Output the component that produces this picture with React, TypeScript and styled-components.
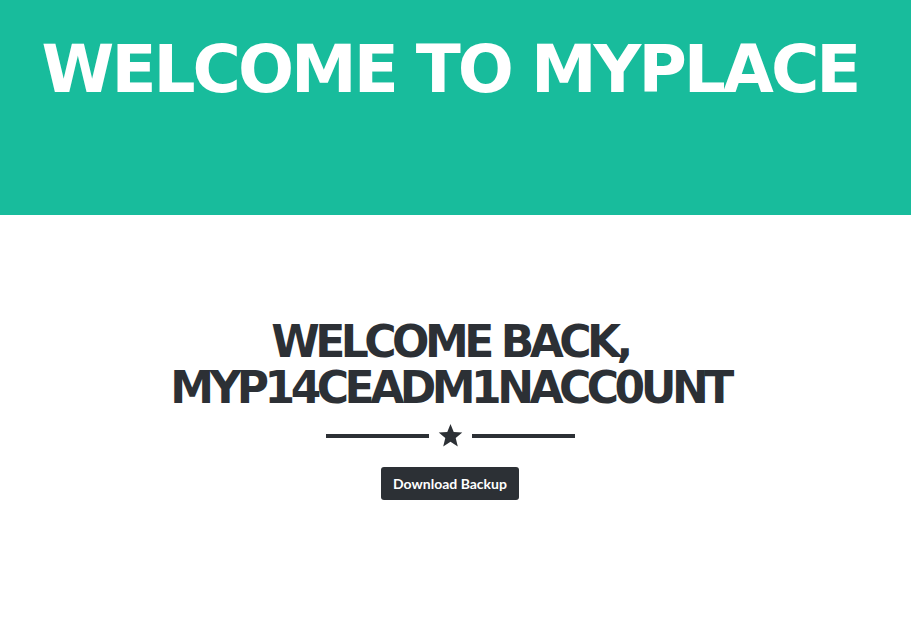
import React from 'react';
import styled, { createGlobalStyle } from 'styled-components';

const GlobalStyle = createGlobalStyle`
  html, body {
    margin: 0;
    padding: 0;
    background: #ffffff;
  }
  body {
    font-family: 'Lato', 'Liberation Sans', sans-serif;
  }
`;

const Page = styled.div`
  width: 100%;
  min-height: 100vh;
  display: flex;
  flex-direction: column;
`;

const Hero = styled.header`
  background-color: #18bc9c;
  height: 215px;
  box-sizing: border-box;
  padding: 34px 11px 0 0;
  display: flex;
  justify-content: center;
`;

const HeroTitle = styled.h1`
  margin: 0;
  color: #ffffff;
  font-family: 'DejaVu Sans', 'Liberation Sans', sans-serif;
  font-weight: 700;
  font-size: 66px;
  line-height: 1.1;
  letter-spacing: -3px;
  text-transform: uppercase;
  white-space: nowrap;
`;

const Content = styled.section`
  padding: 104px 11px 0 0;
  display: flex;
  flex-direction: column;
  align-items: center;
`;

const Greeting = styled.h2`
  margin: 0;
  color: #2c3035;
  font-family: 'DejaVu Sans', 'Liberation Sans', sans-serif;
  font-weight: 700;
  font-size: 44px;
  line-height: 46px;
  letter-spacing: -4.5px;
  text-align: center;
  text-transform: uppercase;
`;

const Divider = styled.div`
  margin-top: 12px;
  display: flex;
  align-items: center;
  gap: 9px;
  height: 25px;
`;

const Rule = styled.span`
  display: block;
  width: 103px;
  height: 4px;
  background: #2c3035;
`;

const StarIcon = styled.svg`
  width: 25px;
  height: 25px;
  display: block;
  fill: #2c3035;
`;

const Button = styled.button`
  margin-top: 19px;
  background: #2c3035;
  color: #ffffff;
  border: none;
  border-radius: 3px;
  padding: 0 12px;
  height: 33px;
  font-family: 'Lato', 'Liberation Sans', sans-serif;
  font-weight: 700;
  font-size: 14px;
  cursor: pointer;
`;

const App: React.FC = () => {
  return (
    <>
      <GlobalStyle />
      <Page>
        <Hero>
          <HeroTitle>Welcome to MyPlace</HeroTitle>
        </Hero>
        <Content>
          <Greeting>
            Welcome back,
            <br />
            MYP14CEADM1NACC0UNT
          </Greeting>
          <Divider>
            <Rule />
            <StarIcon viewBox="0 0 24 24">
              <polygon points="12,1 15.1,8.6 23.3,9.2 17,14.5 19,22.5 12,18.1 5,22.5 7,14.5 0.7,9.2 8.9,8.6" />
            </StarIcon>
            <Rule />
          </Divider>
          <Button>Download Backup</Button>
        </Content>
      </Page>
    </>
  );
};

export default App;
